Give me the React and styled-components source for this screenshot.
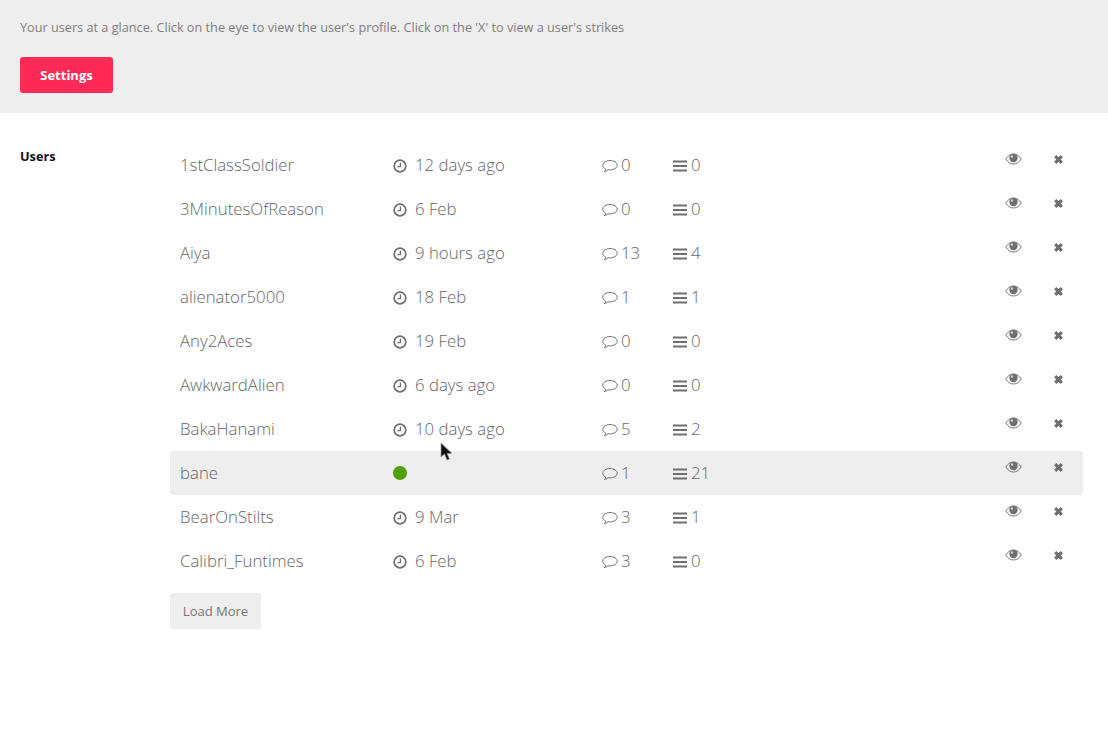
import React from 'react';
import styled, { createGlobalStyle } from 'styled-components';

const users = [
  { name: '1stClassSoldier', seen: '12 days ago', comments: 0, posts: 0 },
  { name: '3MinutesOfReason', seen: '6 Feb', comments: 0, posts: 0 },
  { name: 'Aiya', seen: '9 hours ago', comments: 13, posts: 4 },
  { name: 'alienator5000', seen: '18 Feb', comments: 1, posts: 1 },
  { name: 'Any2Aces', seen: '19 Feb', comments: 0, posts: 0 },
  { name: 'AwkwardAlien', seen: '6 days ago', comments: 0, posts: 0 },
  { name: 'BakaHanami', seen: '10 days ago', comments: 5, posts: 2 },
  { name: 'bane', online: true, comments: 1, posts: 21 },
  { name: 'BearOnStilts', seen: '9 Mar', comments: 3, posts: 1 },
  { name: 'Calibri_Funtimes', seen: '6 Feb', comments: 3, posts: 0 },
];

const ClockIcon = () => (
  <svg width="14" height="14" viewBox="0 0 14 14" fill="none" stroke="#6f6f6f">
    <circle cx="7" cy="7" r="5.8" strokeWidth="1.7" />
    <path d="M7.4 3.4V7.6H4.4" strokeWidth="1.3" />
  </svg>
);

const CommentIcon = () => (
  <svg width="16" height="14" viewBox="0 0 16 14" fill="none" stroke="#6f6f6f" strokeWidth="1">
    <path d="M8 1.5C4.2 1.5 .8 3.4.8 6.2c0 1.7 1.2 3 2.9 3.8-.2 1-.6 1.8-1.3 2.6 1.500-.3 2.800-1 3.700-1.900.6.1 1.200.2 1.900.2 3.800 0 7.200-2 7.200-4.700S11.800 1.500 8 1.500z" />
  </svg>
);

const LinesIcon = () => (
  <svg width="14" height="12" viewBox="0 0 14 12" fill="#6f6f6f">
    <rect y="0.500" width="14" height="2" />
    <rect y="5" width="14" height="2" />
    <rect y="9.500" width="14" height="2" />
  </svg>
);

const EyeIcon = () => (
  <svg width="17" height="12" viewBox="0 0 17 12">
    <path d="M.8 6C2.600 3 5.300 1 8.500 1s5.900 2 7.700 5c-1.800 3-4.500 5-7.700 5S2.600 9 .8 6z" fill="none" stroke="#777" strokeWidth="1" />
    <circle cx="8.500" cy="5" r="4.200" fill="#6f6f6f" />
    <rect x="6" y="2.500" width="2" height="2" fill="#ddd" />
  </svg>
);

const CrossIcon = () => (
  <svg width="11" height="11" viewBox="0 0 11 11" stroke="#6f6f6f" strokeWidth="3.200">
    <path d="M2.200 2.200l6.600 6.600M8.800 2.200l-6.600 6.600" />
  </svg>
);

const CursorIcon = () => (
  <svg width="14" height="20" viewBox="0 0 14 20">
    <path d="M1 1v14l3.500-3 2.500 6 2.500-1-2.500-5.500H12z" fill="#111" stroke="#999" strokeWidth=".7" />
  </svg>
);

const GlobalStyle = createGlobalStyle`
  body {
    margin: 0;
    background: #fff;
    font-family: "Open Sans", "Liberation Sans", sans-serif;
    color: #777;
  }
`;

const Page = styled.div`
  position: relative;
  min-height: 732px;
`;

const Banner = styled.header`
  background: #eeeeee;
  height: 113px;
  box-sizing: border-box;
  padding: 18px 20px 0;
`;

const Intro = styled.p`
  margin: 0 0 21px;
  font-size: 12.700px;
  line-height: 18px;
  color: #808080;
`;

const PrimaryButton = styled.button`
  display: block;
  width: 93px;
  height: 36px;
  padding: 0;
  border: 0;
  border-radius: 3px;
  background: #ff2b56;
  color: #fff;
  font: 700 13px "Open Sans", sans-serif;
`;

const Body = styled.main`
  display: grid;
  grid-template-columns: 150px 913px;
  padding: 30px 0 0 20px;
`;

const SectionTitle = styled.h2`
  margin: 5px 0 0;
  font-size: 12.700px;
  line-height: 17px;
  font-weight: 700;
  color: #111;
`;

const Row = styled.div`
  display: grid;
  grid-template-columns: 213px 209px 71px 1fr 48px 30px;
  align-items: center;
  box-sizing: border-box;
  height: 44px;
  padding: 0 0 2px 10px;
  border-radius: 3px;
  background: ${p => (p.$active ? '#eeeeee' : 'transparent')};
  font-size: 16.800px;
  line-height: 21px;
  font-weight: 300;
  color: #666;
`;

const Name = styled.span`
  white-space: nowrap;
`;

const Stat = styled.span`
  display: flex;
  align-items: center;
  gap: ${p => p.$gap}px;
  white-space: nowrap;

  svg {
    margin-top: 3px;
  }
`;

const OnlineDot = styled.span`
  display: block;
  width: 14px;
  height: 14px;
  margin-top: 2px;
  border-radius: 50%;
  background: #4f9f00;
`;

const Action = styled.span`
  display: flex;
  align-items: center;
  height: 12px;
  margin-top: -10px;
`;

const LoadMore = styled.button`
  display: block;
  width: 91px;
  height: 36px;
  margin-top: 10px;
  padding: 0;
  border: 0;
  border-radius: 3px;
  background: #eeeeee;
  color: #777;
  font: 400 13px "Open Sans", sans-serif;
`;

const Cursor = styled.span`
  position: absolute;
  left: 440px;
  top: 442px;
  line-height: 0;
`;

export default function App() {
  return (
    <Page>
      <GlobalStyle />
      <Banner>
        <Intro>Your users at a glance. Click on the eye to view the user's profile. Click on the 'X' to view a user's strikes</Intro>
        <PrimaryButton>Settings</PrimaryButton>
      </Banner>
      <Body>
        <SectionTitle>Users</SectionTitle>
        <div>
          {users.map(u => (
            <Row key={u.name} $active={u.online}>
              <Name>{u.name}</Name>
              <Stat $gap={8}>
                {u.online ? <OnlineDot /> : <ClockIcon />}
                {u.seen}
              </Stat>
              <Stat $gap={3}><CommentIcon />{u.comments}</Stat>
              <Stat $gap={4}><LinesIcon />{u.posts}</Stat>
              <Action><EyeIcon /></Action>
              <Action><CrossIcon /></Action>
            </Row>
          ))}
          <LoadMore>Load More</LoadMore>
        </div>
      </Body>
      <Cursor><CursorIcon /></Cursor>
    </Page>
  );
}
